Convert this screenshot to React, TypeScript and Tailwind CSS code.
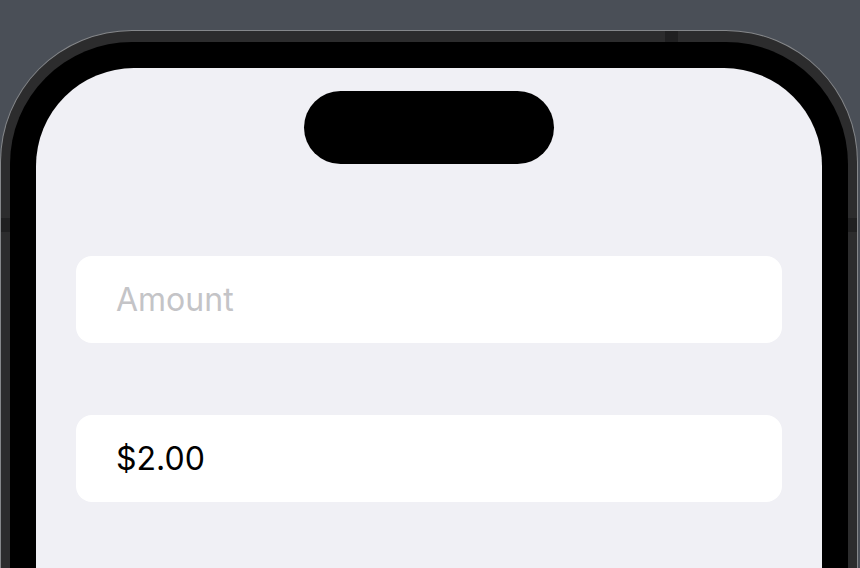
export default function App() {
  return (
    <div className="h-[568px] w-[860px] overflow-hidden bg-[#4a4f57] pt-[30px] font-['Inter','Liberation_Sans',sans-serif]">
      {/* Phone frame */}
      <div className="relative h-[620px] w-[858px] rounded-t-[132px] border-x border-t border-[#85878a] bg-[#2c2c2d] px-[9px] pt-[11px]">
        {/* antenna lines */}
        <div className="absolute left-0 top-[187px] h-[14px] w-[9px] bg-[#202021]" />
        <div className="absolute right-0 top-[187px] h-[14px] w-[9px] bg-[#202021]" />
        <div className="absolute left-[664px] top-0 h-[11px] w-[13px] bg-[#202021]" />

        <div className="h-full rounded-t-[122px] bg-black px-[26px] pt-[26px]">
          <div className="flex h-full flex-col items-center rounded-t-[98px] bg-[#f0f0f5] px-[40px] pt-[23px]">
            {/* Dynamic Island */}
            <div className="h-[73px] w-[250px] rounded-full bg-black" />

            <div className="mt-[92px] flex w-full flex-col gap-[72px]">
              <div className="flex h-[87px] items-center rounded-[16px] bg-white pl-[40px]">
                <span className="text-[32px] text-[#c4c4c7]">Amount</span>
              </div>
              <div className="flex h-[87px] items-center rounded-[16px] bg-white pl-[40px]">
                <span className="text-[32px] text-black">$2.00</span>
              </div>
            </div>
          </div>
        </div>
      </div>
    </div>
  )
}
